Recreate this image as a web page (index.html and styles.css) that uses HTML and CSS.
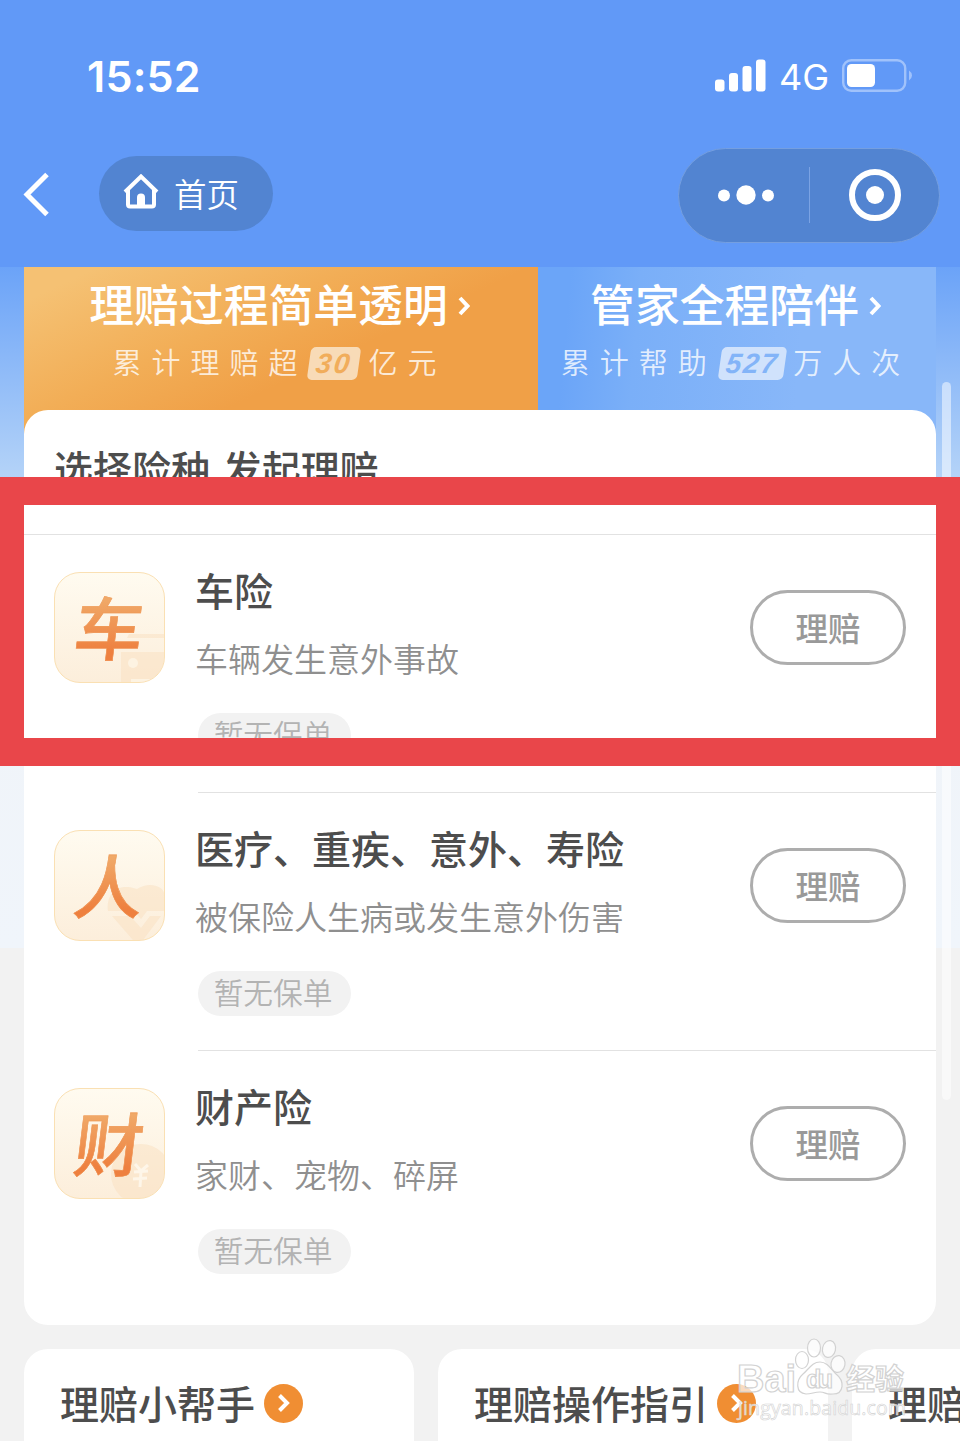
FILE: index.html
```html
<!DOCTYPE html>
<html lang="zh-CN">

<head>
    <meta charset="UTF-8">
    <meta name="viewport" content="width=device-width, initial-scale=1.0">
    <title>理赔</title>
    <link rel="stylesheet" href="styles.css">
</head>

<body>
    <div class="page">
        <!-- 顶部导航 -->
        <header class="header">
            <div class="status">
                <span class="time">15:52</span>
                <div class="status-right">
                    <svg class="signal" width="52" height="34" viewBox="0 0 52 34" fill="#fff">
                        <rect x="0" y="20.500" width="9.500" height="12" rx="3" />
                        <rect x="14" y="14" width="9" height="18.500" rx="3" />
                        <rect x="27.500" y="7" width="9" height="25.500" rx="3" />
                        <rect x="41" y="0.500" width="9.500" height="32" rx="3" />
                    </svg>
                    <span class="net">4G</span>
                    <svg class="battery" width="70" height="34" viewBox="0 0 70 34">
                        <rect x="1.200" y="1.200" width="62" height="30.500" rx="8" fill="none" stroke="#a0c2fb" stroke-width="2.400" />
                        <rect x="5" y="5" width="28" height="23" rx="4.500" fill="#fff" />
                        <path d="M67 11.500q3 2 3 5t-3 5z" fill="#a0c2fb" />
                    </svg>
                </div>
            </div>
            <nav class="nav">
                <svg class="back" width="27" height="46" viewBox="0 0 27 46">
                    <path d="M24 2.500L4 22.500L24 42.500" fill="none" stroke="#fff" stroke-width="5" />
                </svg>
                <div class="home">
                    <svg width="36" height="36" viewBox="0 0 36 36">
                        <path d="M2 18L18 2.500L34 18M5 15.500V30.500Q5 32.500 7 32.500H29Q31 32.500 31 30.500V15.500" fill="none" stroke="#fff" stroke-width="4" />
                        <path d="M14 34V23.500a4 4 0 0 1 8 0V34z" fill="#fff" />
                    </svg>
                    <span>首页</span>
                </div>
                <div class="capsule">
                    <svg class="dots" width="56" height="20" viewBox="0 0 56 20" fill="#fff">
                        <circle cx="6" cy="10.500" r="6" />
                        <circle cx="28" cy="10" r="9.700" />
                        <circle cx="50" cy="10.500" r="6" />
                    </svg>
                    <i class="capsule-line"></i>
                    <svg class="target" width="52" height="52" viewBox="0 0 52 52">
                        <circle cx="26" cy="26" r="23" fill="none" stroke="#fff" stroke-width="6" />
                        <circle cx="26" cy="26" r="9" fill="#fff" />
                    </svg>
                </div>
            </nav>
        </header>

        <main class="main">
            <div class="tabs">
                <div class="tab tab-orange">
                    <div class="tab-title">理赔过程简单透明
                        <svg width="12" height="20" viewBox="0 0 12 20"><path d="M2 2L9.500 10L2 18" /></svg>
                    </div>
                    <div class="tab-sub"><span>累计理赔超</span><b class="badge"><em>30</em></b><span>亿元</span></div>
                </div>
                <div class="tab tab-blue">
                    <div class="tab-title">管家全程陪伴
                        <svg width="12" height="20" viewBox="0 0 12 20"><path d="M2 2L9.500 10L2 18" /></svg>
                    </div>
                    <div class="tab-sub"><span>累计帮助</span><b class="badge"><em>527</em></b><span>万人次</span></div>
                </div>
            </div>

            <!-- 险种列表 -->
            <section class="card">
                <h2 class="card-title">选择险种 发起理赔</h2>
                <div class="item">
                    <div class="icon">
                        <svg class="icon-bg" width="109" height="109" viewBox="0 0 109 109" fill="#f9dfbf">
                            <path d="M66 79H109V109H66zM74 61H109V65H72z" opacity=".5" />
                            <circle cx="78" cy="90" r="5" fill="#fdf3e2" />
                            <path d="M76 106H98V109H76z" fill="#fdf3e2" />
                        </svg>
                        <span class="icon-text">车</span>
                    </div>
                    <div class="info">
                        <h3>车险</h3>
                        <p>车辆发生意外事故</p>
                        <span class="tag">暂无保单</span>
                    </div>
                    <button class="btn">理赔</button>
                </div>
                <div class="item">
                    <div class="icon">
                        <svg class="icon-bg" width="109" height="109" viewBox="0 0 109 109" fill="#f9dfbf">
                            <path d="M53 80C51 63 62 51 82 58C94 50 108 55 109 62V80H92L86 88L79 80zM57 85H75L86 97L95 85H106L88 109H78z" opacity=".5" />
                        </svg>
                        <span class="icon-text">人</span>
                    </div>
                    <div class="info">
                        <h3>医疗、重疾、意外、寿险</h3>
                        <p>被保险人生病或发生意外伤害</p>
                        <span class="tag">暂无保单</span>
                    </div>
                    <button class="btn">理赔</button>
                </div>
                <div class="item">
                    <div class="icon">
                        <svg class="icon-bg" width="109" height="109" viewBox="0 0 109 109">
                            <circle cx="86" cy="85" r="30" fill="#f9dfbf" opacity=".5" />
                            <path d="M80 75L86 82L93 76M79 83L93 82M78 90L92 89M86 82L85 98" fill="none" stroke="#fef6e9" stroke-width="3" />
                        </svg>
                        <span class="icon-text">财</span>
                    </div>
                    <div class="info">
                        <h3>财产险</h3>
                        <p>家财、宠物、碎屏</p>
                        <span class="tag">暂无保单</span>
                    </div>
                    <button class="btn">理赔</button>
                </div>
            </section>

            <!-- 底部入口 -->
            <section class="links">
                <div class="link">理赔小帮手
                    <svg width="39" height="39" viewBox="0 0 39 39"><circle cx="19.500" cy="19.500" r="19.500" fill="#f08e33" /><path d="M15.500 11.500L23 19L15.500 26.500" /></svg>
                </div>
                <div class="link">理赔操作指引
                    <svg width="39" height="39" viewBox="0 0 39 39"><circle cx="19.500" cy="19.500" r="19.500" fill="#f08e33" /><path d="M15.500 11.500L23 19L15.500 26.500" /></svg>
                </div>
                <div class="link">理赔</div>
            </section>
        </main>

        <i class="scrollbar"></i>
        <!-- 红色标注框 -->
        <div class="mark"></div>

        <!-- 水印 -->
        <svg class="watermark" width="180" height="90" viewBox="0 0 180 90">
            <g class="paw">
                <ellipse cx="72" cy="24" rx="6.500" ry="8.500" />
                <ellipse cx="84" cy="12" rx="6.500" ry="9" />
                <ellipse cx="99" cy="13" rx="6.500" ry="8.500" transform="rotate(12 99 13)" />
                <ellipse cx="108" cy="28" rx="7" ry="8.500" transform="rotate(10 108 28)" />
                <path d="M90 26C97 26 101 33 106 38C115 45 114 58 103 58C95 59 96 56 90 56C84 56 82 58 76 58C65 57 66 44 73 38C79 33 82 26 90 26z" />
            </g>
            <text class="wm-big" x="7" y="56" textLength="59" lengthAdjust="spacingAndGlyphs">Bai</text>
            <text class="wm-du" x="76" y="52" textLength="27">du</text>
            <text class="wm-cn" x="116" y="54" textLength="58">经验</text>
            <text class="wm-url" x="8" y="79" textLength="168">jingyan.baidu.com</text>
        </svg>
    </div>
</body>

</html>
```

FILE: styles.css
```css
* {
    box-sizing: border-box;
    margin: 0;
    padding: 0;
}

body {
    font-family: "Noto Sans CJK SC", "Noto Sans", sans-serif;
    background-color: #f2f2f2;
}

.page {
    position: relative;
    width: 960px;
    height: 1441px;
    overflow: hidden;
}

/* 顶部 */
.header {
    height: 267px;
    background-color: #6199f7;
    color: #fff;
}

.status {
    height: 147px;
    padding: 5px 48px 0 87px;
    display: flex;
    align-items: center;
    justify-content: space-between;
}

.time {
    font: 600 43px/1 Inter, sans-serif;
    letter-spacing: 0.2px;
}

.status-right {
    display: flex;
    align-items: center;
}

.net {
    font: 400 36px/1 Inter, sans-serif;
    margin: 2px 13px 0 12px;
}

.nav {
    height: 96px;
    padding: 0 20px 0 23px;
    display: flex;
    align-items: center;
}

.home {
    width: 174px;
    height: 75px;
    margin: -3px auto 0 49px;
    padding: 0 0 3px 24px;
    display: flex;
    align-items: center;
    gap: 15px;
    border-radius: 38px;
    background-color: #5284d1;
    font-size: 32.500px;
    font-weight: 350;
}

.capsule {
    width: 262px;
    height: 95px;
    padding: 0 38px 0 39px;
    display: flex;
    align-items: center;
    justify-content: space-between;
    border: 1px solid #759fe0;
    border-radius: 48px;
    background-color: #5284d1;
}

.capsule-line {
    width: 1px;
    height: 56px;
    margin-left: -5px;
    background-color: #7ba3e4;
}

/* 主体 */
.main {
    height: 1174px;
    padding: 0 24px;
    background: linear-gradient(#6ba3f8 0, #b4d3f8 210px, #f0f4f9 460px, #f0f5fb 681px, #f2f2f2 681px);
}

.tabs {
    height: 190px;
    margin-bottom: -47px;
    display: flex;
    color: #fff;
}

.tab {
    padding-top: 3px;
    display: flex;
    flex-direction: column;
    align-items: center;
}

.tab-orange {
    width: 514px;
    padding-right: 3px;
    background: linear-gradient(155deg, #f5c173 8%, #f2ae57 35%, #f0a047 55%);
}

.tab-blue {
    width: 398px;
    padding-right: 3px;
    background: linear-gradient(95deg, #6ba5f8 8%, #7aaff8 25%, #88b7f9 65%);
}

.tab-title {
    display: flex;
    align-items: center;
    gap: 10px;
    font-size: 44.800px;
    font-weight: 500;
    line-height: 66px;
}

.tab-title svg {
    margin-top: 6px;
}

.tab-title path,
.link path {
    fill: none;
    stroke: #fff;
    stroke-width: 4;
}

.tab-sub {
    display: flex;
    align-items: center;
    font-size: 29px;
    font-weight: 350;
    line-height: 50px;
    letter-spacing: 10px;
    color: rgba(255, 255, 255, 0.8);
}

.badge {
    height: 33px;
    margin: 4px 9px 0 2px;
    padding: 0 7px;
    border-radius: 5px;
    background-color: #f8dbb7;
    color: #f1ad5b;
    transform: skewX(-8deg);
    font: 700 28px/34px "Liberation Sans", sans-serif;
    letter-spacing: 2.500px;
}

.tab-blue .badge {
    margin-left: 3px;
    padding: 0 6px;
    background-color: #d0e2fc;
    color: #83b4f8;
    letter-spacing: 2px;
}

.card {
    position: relative;
    height: 915px;
    border-radius: 24px;
    background-color: #fff;
    color: #4d4d4d;
}

.card-title {
    height: 124px;
    padding: 28px 30px 0;
    font-size: 39px;
    font-weight: 500;
    line-height: 58px;
    word-spacing: 4px;
}

.item {
    position: relative;
    height: 258px;
    padding: 38px 30px 0;
    display: flex;
    align-items: flex-start;
}

.item::before {
    content: "";
    position: absolute;
    top: 0;
    left: 174px;
    right: 0;
    height: 1px;
    background-color: #e2e2e2;
}

.card-title + .item::before {
    left: 0;
}

.icon {
    position: relative;
    width: 111px;
    height: 111px;
    border: 1px solid #fae0b3;
    border-radius: 26px;
    background: linear-gradient(#fffbf0, #fceedb);
    overflow: hidden;
    text-align: center;
}

.icon-bg {
    position: absolute;
    top: 0;
    left: 0;
}

.icon-text {
    position: relative;
    display: block;
    font-size: 69px;
    font-weight: 500;
    line-height: 105px;
    color: transparent;
    background: linear-gradient(#f0a968 25%, #ee803f 75%);
    -webkit-background-clip: text;
    background-clip: text;
    -webkit-text-stroke: 0.600px rgba(239, 148, 82, 0.6);
    transform: skewX(-7deg);
}

.info {
    flex: 1;
    padding-left: 30px;
}

.info h3 {
    margin-top: -2px;
    font-size: 39px;
    font-weight: 500;
    line-height: 38px;
}

.info p {
    margin-top: 26px;
    font-size: 33px;
    font-weight: 350;
    line-height: 48px;
    color: #8f8f8f;
}

.tag {
    display: block;
    width: 153px;
    height: 45px;
    margin: 31px 0 0 3px;
    padding-right: 3px;
    border-radius: 23px;
    background-color: #f2f2f2;
    color: #b3b3b3;
    font-size: 29.700px;
    font-weight: 350;
    line-height: 42px;
    text-align: center;
}

.btn {
    width: 156px;
    height: 75px;
    margin-top: 18px;
    padding-bottom: 2px;
    border: 3px solid #adadad;
    border-radius: 38px;
    background-color: #fff;
    color: #999;
    font-family: inherit;
    font-size: 32.500px;
    font-weight: 500;
}

.links {
    display: flex;
    gap: 24px;
    margin-top: 24px;
}

.link {
    flex: 0 0 390px;
    height: 120px;
    padding: 0 36px 14px;
    display: flex;
    align-items: center;
    gap: 9px;
    border-radius: 24px;
    background-color: #fff;
    color: #4d4d4d;
    font-size: 39px;
    font-weight: 500;
    white-space: nowrap;
}

.link svg {
    margin-top: 3px;
}

/* 浮层 */
.scrollbar {
    position: absolute;
    top: 382px;
    left: 942px;
    width: 9px;
    height: 718px;
    border-radius: 5px;
    background-color: rgba(255, 255, 255, 0.5);
}

.mark {
    position: absolute;
    top: 477px;
    left: 0;
    width: 960px;
    height: 289px;
    border: solid #e9464a;
    border-width: 28px 24px 28.500px;
}

.watermark {
    position: absolute;
    top: 1336px;
    left: 730px;
    fill: rgba(255, 255, 255, 0.7);
    stroke: #d2d2d2;
    stroke-width: 1.200;
    font-family: "Liberation Sans", sans-serif;
}

.wm-big {
    font-size: 38px;
    font-weight: 700;
}

.wm-du {
    font-size: 25px;
    font-weight: 700;
}

.wm-cn {
    font-family: "Noto Sans CJK SC", sans-serif;
    font-size: 29px;
    font-weight: 700;
}

.wm-url {
    font-family: "Open Sans", sans-serif;
    font-size: 19.500px;
    stroke-width: 0.600;
}
```
